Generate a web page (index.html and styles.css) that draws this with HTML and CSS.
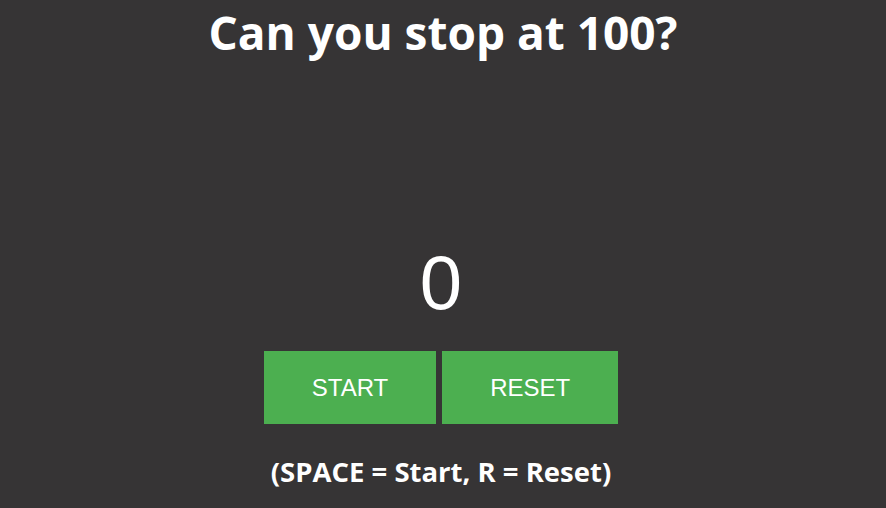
FILE: index.html
```html
<!DOCTYPE html>
<html lang="en">
<head>
  <meta charset="UTF-8">
  <meta name="viewport" content="width=device-width, initial-scale=1.0">
  <title>Stop at 100</title>
  <link rel="stylesheet" href="styles.css">
</head>
<body>
  <h1 class="title">Can you stop at 100?</h1>

  <div class="game">
    <div class="counter" id="counter">0</div>
    <div class="controls">
      <button class="btn" id="start">START</button>
      <button class="btn" id="reset">RESET</button>
    </div>
    <p class="hint">(SPACE = Start, R = Reset)</p>
  </div>
</body>
</html>
```

FILE: styles.css
```css
/* Reset and global styling */
* {
  margin: 0;
  padding: 0;
  box-sizing: border-box;
}

body {
  height: 100vh;
  background-color: #363435;
  color: #fff;
  font-family: "Open Sans", "Noto Sans", sans-serif;
  text-align: center;
}

/* Heading */
.title {
  font-size: 46px;
  font-weight: 700;
  line-height: 1.2;
  padding-top: 5px;
}

/* Counter + buttons block */
.game {
  margin-top: 185px;
  padding-right: 4px;
  display: flex;
  flex-direction: column;
  align-items: center;
}

.counter {
  font-family: "Liberation Sans", Arial, sans-serif;
  font-size: 76px;
  line-height: 1;
  margin-bottom: 30px;
}

.controls {
  display: flex;
  gap: 6px;
}

.btn {
  height: 73px;
  padding: 0 48px;
  border: none;
  background-color: #4caf50;
  color: #fff;
  font-family: "Liberation Sans", Arial, sans-serif;
  font-size: 24px;
  cursor: pointer;
}

.btn:hover {
  background-color: #45a049;
}

/* Keyboard hint */
.hint {
  margin-top: 29px;
  font-size: 27.5px;
  font-weight: 700;
}
```
